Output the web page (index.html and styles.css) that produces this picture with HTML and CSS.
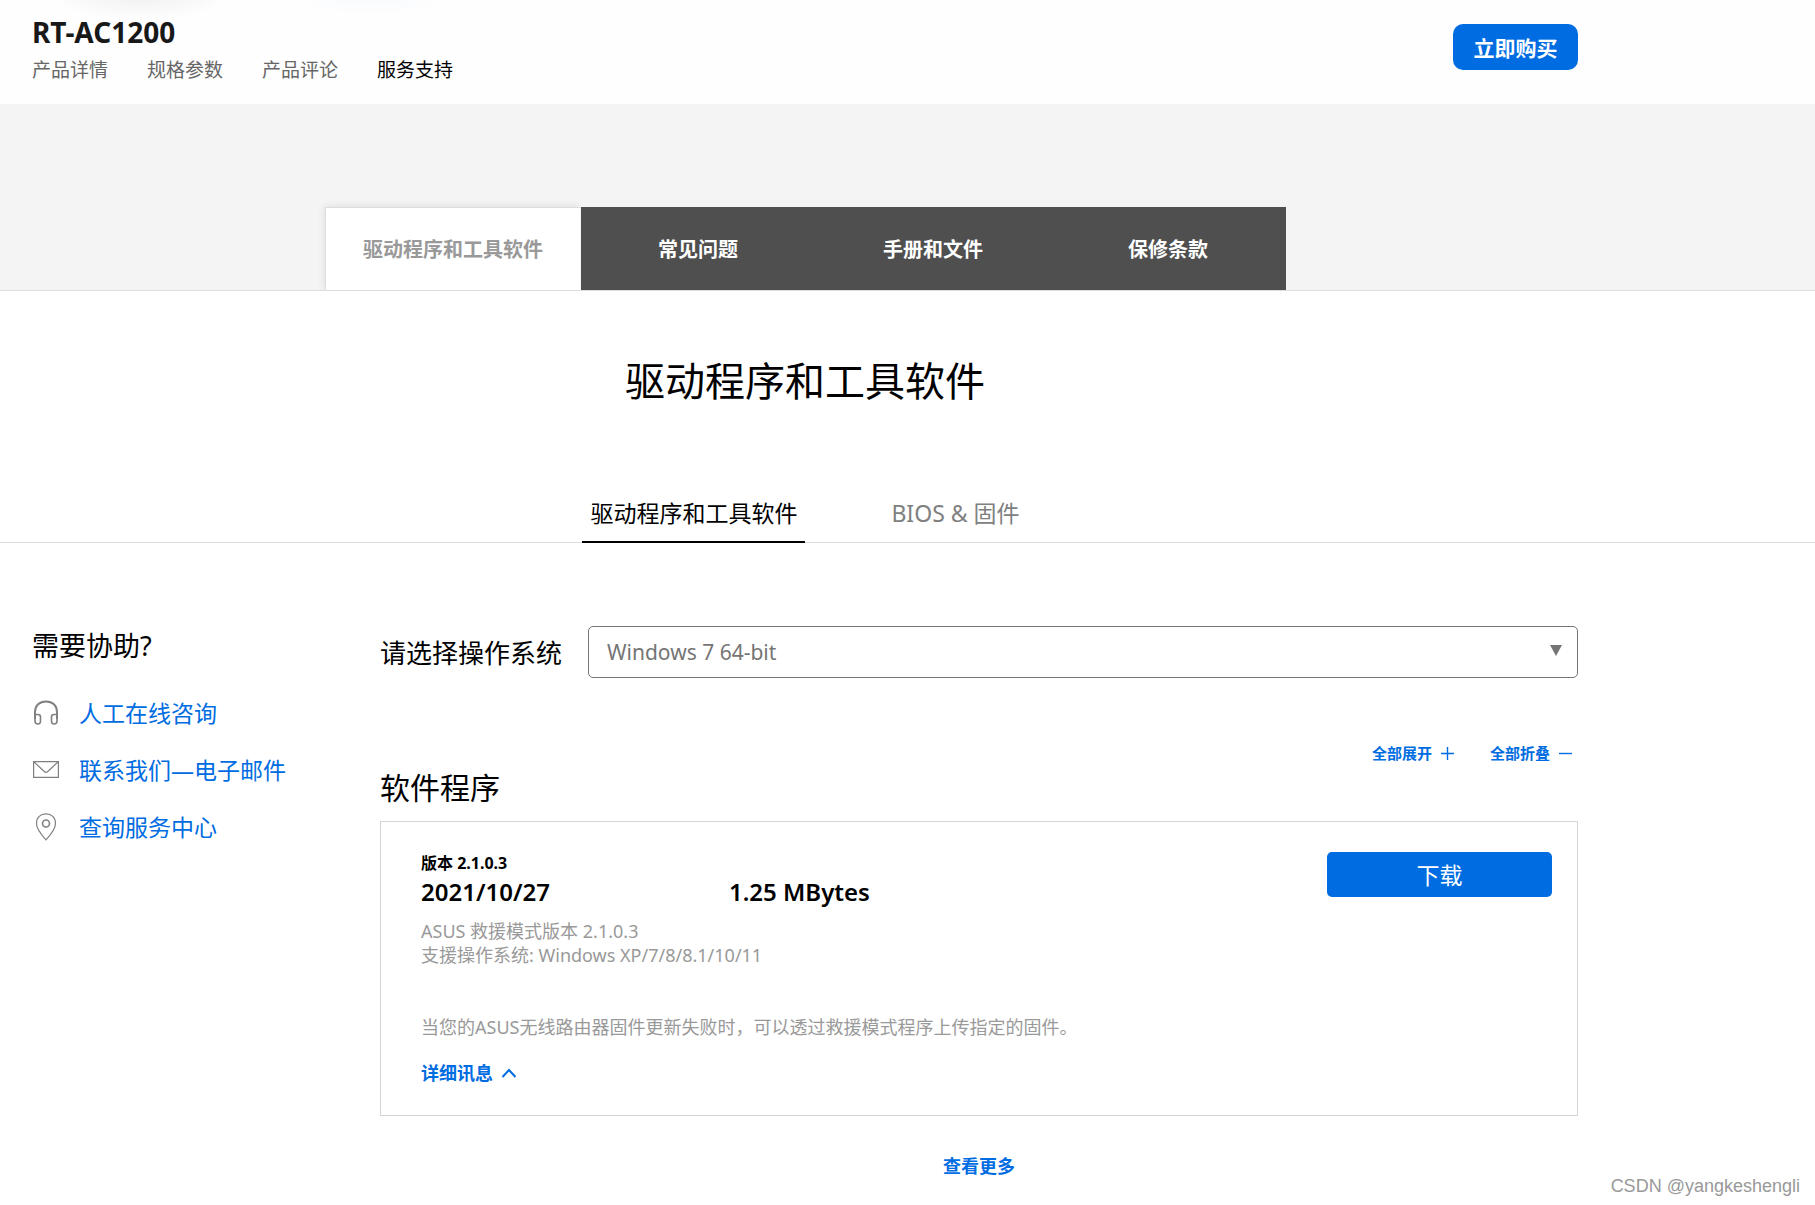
FILE: index.html
```html
<!DOCTYPE html>
<html lang="zh-CN">
<head>
<meta charset="utf-8">
<meta name="viewport" content="width=device-width, initial-scale=1">
<title>RT-AC1200 服务支持</title>
<link rel="stylesheet" href="styles.css">
</head>
<body>
<header class="product-bar">
  <div class="product-info">
    <h1 class="product-name">RT-AC1200</h1>
    <nav class="product-nav">
      <a href="#detail">产品详情</a>
      <a href="#spec">规格参数</a>
      <a href="#review">产品评论</a>
      <a href="#support" class="current">服务支持</a>
    </nav>
  </div>
  <button type="button" class="buy-button">立即购买</button>
</header>

<nav class="support-tabs">
  <a href="#driver" class="support-tab active">驱动程序和工具软件</a>
  <a href="#faq" class="support-tab">常见问题</a>
  <a href="#manual" class="support-tab">手册和文件</a>
  <a href="#warranty" class="support-tab">保修条款</a>
</nav>

<h2 class="page-title">驱动程序和工具软件</h2>
<nav class="sub-tabs">
  <a href="#utility" class="sub-tab active">驱动程序和工具软件</a>
  <a href="#bios" class="sub-tab">BIOS &amp; 固件</a>
</nav>

<div class="content">
  <aside class="help">
    <h3 class="help-title">需要协助?</h3>
    <ul class="help-list">
      <li>
        <svg class="help-icon" viewBox="0 0 26 28" fill="none" stroke="#808080" stroke-width="2"><path d="M2 20V13C2 6.500 6.500 2.500 13 2.500S24 6.500 24 13V20"/><path stroke-width="1.600" d="M2 15.500H5Q7.500 15.500 7.500 18V22Q7.500 25 5 25Q2 25 2 22ZM24 15.500H21Q18.500 15.500 18.500 18V22Q18.500 25 21 25Q24 25 24 22Z"/></svg>
        <a href="#chat">人工在线咨询</a>
      </li>
      <li>
        <svg class="help-icon" viewBox="0 0 26 28" fill="none" stroke="#808080" stroke-width="1.200"><path d="M.6 5.600H25.400V21.400H.6ZM.6 5.600L11 15.300Q13 17.300 15 15.300L25.400 5.600"/></svg>
        <a href="#mail">联系我们—电子邮件</a>
      </li>
      <li>
        <svg class="help-icon" viewBox="0 0 26 28" fill="none" stroke="#808080" stroke-width="1.200"><path d="M13 26.800Q3.500 16.500 3.500 10.500C3.500 4.500 7.500 .8 13 .8S22.500 4.500 22.500 10.500Q22.500 16.500 13 26.800Z"/><circle cx="13" cy="10.500" r="3.500" stroke-width="1.600"/></svg>
        <a href="#center">查询服务中心</a>
      </li>
    </ul>
  </aside>

  <main class="downloads">
    <div class="os-row">
      <label for="os" class="os-label">请选择操作系统</label>
      <div class="os-field">
        <select id="os" class="os-select">
          <option>Windows 7 64-bit</option>
          <option>Windows 10 64-bit</option>
        </select>
        <svg class="os-arrow" viewBox="0 0 12 11"><path d="M0 0H12L6 11Z" fill="#757575"/></svg>
      </div>
    </div>

    <div class="toggle-row">
      <button type="button" class="toggle">全部展开<svg viewBox="0 0 13 13" stroke="currentColor" stroke-width="1.400"><path d="M0 6.500H13M6.500 0V13"/></svg></button>
      <button type="button" class="toggle">全部折叠<svg viewBox="0 0 13 13" stroke="currentColor" stroke-width="1.400"><path d="M0 6.500H13"/></svg></button>
    </div>

    <h3 class="group-title">软件程序</h3>
    <article class="file-card">
      <div class="file-info">
        <p class="file-version">版本 2.1.0.3</p>
        <div class="file-meta">
          <span class="file-date">2021/10/27</span>
          <span>1.25 MBytes</span>
        </div>
        <p class="file-text">ASUS 救援模式版本 2.1.0.3<br>支援操作系统: Windows XP/7/8/8.1/10/11</p>
        <p class="file-note">当您的ASUS无线路由器固件更新失败时，可以透过救援模式程序上传指定的固件。</p>
        <button type="button" class="detail-toggle">详细讯息<svg viewBox="0 0 16 12" fill="none" stroke="currentColor" stroke-width="2"><path d="M1.500 10L8 3L14.500 10"/></svg></button>
      </div>
      <button type="button" class="download-button">下载</button>
    </article>
    <a href="#more" class="see-more">查看更多</a>
  </main>
</div>
<div class="watermark">CSDN @yangkeshengli</div>
</body>
</html>
```

FILE: styles.css
```css
* {
  box-sizing: border-box;
}

body {
  margin: 0;
  background: #fff;
  color: #000;
  font-family: "Noto Sans", "Noto Sans CJK SC", sans-serif;
  font-size: 18px;
  line-height: 24px;
  position: relative;
}

h1, h2, h3, p, ul {
  margin: 0;
  padding: 0;
  font-weight: 400;
}

a {
  color: inherit;
  text-decoration: none;
}

button {
  border: 0;
  padding: 0;
  background: none;
  font: inherit;
  cursor: pointer;
}

.product-bar,
.support-tabs,
.page-title,
.sub-tabs,
.content {
  padding-left: 32px;
  padding-right: 237px;
}

.product-bar {
  display: flex;
  justify-content: space-between;
  align-items: flex-start;
  height: 104px;
  background:
    radial-gradient(ellipse 90px 26px at 140px -6px, #f0f0f0, transparent),
    radial-gradient(ellipse 80px 20px at 370px -4px, #f8fafe, transparent),
    #fefefe;
}

.product-name {
  padding-top: 14px;
  color: #181818;
  font-size: 28px;
  font-weight: 700;
  line-height: 36px;
}

.product-nav {
  display: flex;
  gap: 39px;
  padding-top: 8px;
  color: #666;
  font-size: 19px;
}

.product-nav .current {
  color: #000;
}

.buy-button {
  width: 125px;
  height: 46px;
  margin-top: 24px;
  padding-top: 2px;
  border-radius: 10px;
  background: #006ce1;
  color: #fff;
  font-size: 21px;
  font-weight: 700;
}

.support-tabs {
  display: flex;
  justify-content: center;
  padding-top: 103px;
  border-bottom: 1px solid #ddd;
  background: #f4f4f4;
}

.support-tab {
  width: 235px;
  padding-top: 3px;
  background: #4f4f4f;
  color: #fff;
  font-size: 20px;
  font-weight: 700;
  line-height: 80px;
  text-align: center;
}

.support-tab.active {
  width: 256px;
  padding-top: 2px;
  border: solid #ddd;
  border-width: 1px 0 0 1px;
  background: #fff;
  box-shadow: 0 0 8px #0000001a;
  clip-path: inset(-8px 0 0 -8px);
  color: #999;
}

.page-title {
  padding-top: 60px;
  font-size: 40px;
  line-height: 60px;
  text-align: center;
}

.sub-tabs {
  display: flex;
  justify-content: center;
  gap: 78px;
  margin-top: 80px;
  border-bottom: 1px solid #ddd;
}

.sub-tab {
  margin-bottom: -1px;
  padding: 0 8px 6px;
  border-bottom: 2px solid transparent;
  color: #808080;
  font-size: 23px;
  line-height: 44px;
}

.sub-tab.active {
  border-color: #000;
  color: #000;
}

.content {
  display: grid;
  grid-template-columns: 348px 1fr;
  padding-top: 83px;
}

.help-title {
  font-size: 27px;
  line-height: 40px;
}

.help-list {
  display: grid;
  gap: 27px;
  padding-top: 32px;
  color: #006ce1;
  font-size: 23px;
  line-height: 30px;
  list-style: none;
}

.help-list li {
  display: flex;
  align-items: center;
  gap: 19px;
}

.help-icon {
  width: 28px;
  height: 28px;
}

.os-row {
  display: flex;
  align-items: center;
  gap: 26px;
}

.os-label {
  padding-top: 2px;
  font-size: 26px;
  line-height: 40px;
}

.os-field {
  position: relative;
  flex: 1;
}

.os-select {
  display: block;
  width: 100%;
  height: 52px;
  padding: 0 18px;
  border: 1px solid #757575;
  border-radius: 5px;
  appearance: none;
  background: #fff;
  color: #757575;
  font: inherit;
  font-size: 21px;
}

.os-arrow {
  position: absolute;
  top: 19px;
  right: 16px;
  width: 12px;
  height: 11px;
  pointer-events: none;
}

.toggle-row {
  display: flex;
  justify-content: flex-end;
  gap: 36px;
  padding: 65px 6px 5px 0;
}

.toggle {
  display: flex;
  align-items: center;
  gap: 9px;
  color: #006ce1;
  font-size: 15px;
  font-weight: 700;
  line-height: 20px;
}

.toggle svg {
  width: 13px;
  height: 13px;
}

.group-title {
  font-size: 30px;
  line-height: 40px;
}

.file-card {
  display: flex;
  justify-content: space-between;
  align-items: flex-start;
  margin-top: 13px;
  padding: 29px 25px 30px 40px;
  border: 1px solid #d5d5d5;
}

.file-version {
  font-size: 16px;
  font-weight: 700;
}

.file-meta {
  display: flex;
  padding: 1px 0 11px;
  font-size: 24px;
  font-weight: 600;
  line-height: 32px;
}

.file-date {
  width: 308px;
}

.file-text,
.file-note {
  color: #999;
}

.file-note {
  padding: 48px 0 22px;
}

.detail-toggle {
  display: flex;
  align-items: center;
  gap: 8px;
  color: #006ce1;
  font-weight: 700;
}

.detail-toggle svg {
  width: 16px;
  height: 12px;
}

.download-button {
  width: 225px;
  height: 45px;
  margin-top: 1px;
  border-radius: 5px;
  background: #006ce1;
  color: #fff;
  font-size: 23px;
}

.see-more {
  display: block;
  width: fit-content;
  margin: 38px auto 27px;
  color: #006ce1;
  font-weight: 700;
}

.watermark {
  position: absolute;
  right: 15px;
  bottom: 7px;
  color: #999;
  font-family: "Liberation Sans", sans-serif;
  font-size: 18px;
}
```
